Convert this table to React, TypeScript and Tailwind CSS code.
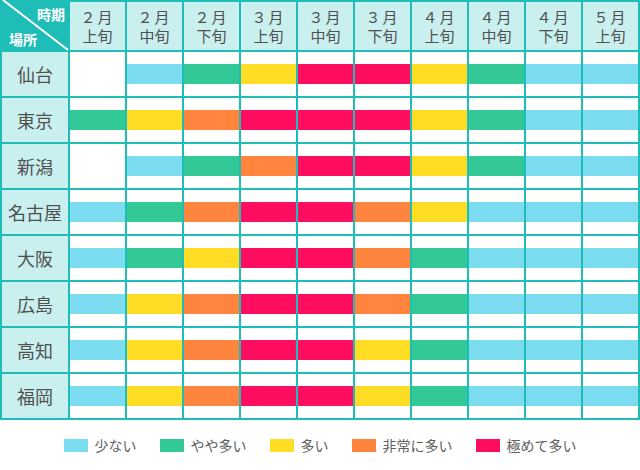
const C = {
  s: "bg-[#7cdcf0]",
  g: "bg-[#33c997]",
  y: "bg-[#ffdd24]",
  o: "bg-[#ff843e]",
  p: "bg-[#ff0e5f]",
  n: "",
};

type K = keyof typeof C;

const periods = [
  ["２月", "上旬"],
  ["２月", "中旬"],
  ["２月", "下旬"],
  ["３月", "上旬"],
  ["３月", "中旬"],
  ["３月", "下旬"],
  ["４月", "上旬"],
  ["４月", "中旬"],
  ["４月", "下旬"],
  ["５月", "上旬"],
];

const rows: { name: string; v: K[] }[] = [
  { name: "仙台", v: ["n", "s", "g", "y", "p", "p", "y", "g", "s", "s"] },
  { name: "東京", v: ["g", "y", "o", "p", "p", "p", "y", "g", "s", "s"] },
  { name: "新潟", v: ["n", "s", "g", "o", "p", "p", "y", "g", "s", "s"] },
  { name: "名古屋", v: ["s", "g", "o", "p", "p", "o", "y", "s", "s", "s"] },
  { name: "大阪", v: ["s", "g", "y", "p", "p", "o", "g", "s", "s", "s"] },
  { name: "広島", v: ["s", "y", "o", "p", "p", "o", "g", "s", "s", "s"] },
  { name: "高知", v: ["s", "y", "o", "p", "p", "y", "g", "s", "s", "s"] },
  { name: "福岡", v: ["s", "y", "o", "p", "p", "y", "g", "s", "s", "s"] },
];

const legend: { k: K; label: string }[] = [
  { k: "s", label: "少ない" },
  { k: "g", label: "やや多い" },
  { k: "y", label: "多い" },
  { k: "o", label: "非常に多い" },
  { k: "p", label: "極めて多い" },
];

export default function App() {
  return (
    <div
      className="h-[470px] w-[640px] bg-white"
      style={{ fontFamily: '"Noto Sans CJK JP", "Noto Sans", sans-serif' }}
    >
      <div className="grid w-[640px] grid-cols-[66px_repeat(10,55px)] grid-rows-[48px_repeat(8,44px)] gap-[2px] bg-[#1fbdb7] p-[2px]">
        {/* corner */}
        <div className="relative bg-[#1fbdb7] text-[14px] font-bold leading-none text-white">
          <svg className="absolute -left-[2px] -top-[2px]" width="70" height="52" viewBox="0 0 70 52">
            <line x1="3" y1="0" x2="68" y2="50" stroke="white" strokeWidth="2" />
          </svg>
          <span className="absolute right-[3px] top-[5px]">時期</span>
          <span className="absolute bottom-[4px] left-[7px]">場所</span>
        </div>

        {periods.map(([m, p], i) => (
          <div
            key={i}
            className="flex flex-col items-center justify-center bg-[#c9efee] text-[15px] leading-[19px] text-[#505050]"
          >
            <span className="tracking-[2px]">{m}</span>
            <span>{p}</span>
          </div>
        ))}

        {rows.map((r) => (
          <>
            <div
              key={r.name}
              className="flex items-center justify-center bg-[#c9efee] text-[18px] text-[#505050]"
            >
              {r.name}
            </div>
            {r.v.map((k, i) => (
              <div key={r.name + i} className="flex items-center bg-white">
                {k !== "n" && <div className={`h-[20px] w-full ${C[k]}`} />}
              </div>
            ))}
          </>
        ))}
      </div>

      <div className="flex h-[50px] items-center justify-center gap-[23px] text-[14px] text-[#606060]">
        {legend.map((l) => (
          <div key={l.k} className="flex items-center gap-[7px]">
            <span className={`h-[13px] w-[24px] ${C[l.k]}`} />
            <span>{l.label}</span>
          </div>
        ))}
      </div>
    </div>
  );
}
